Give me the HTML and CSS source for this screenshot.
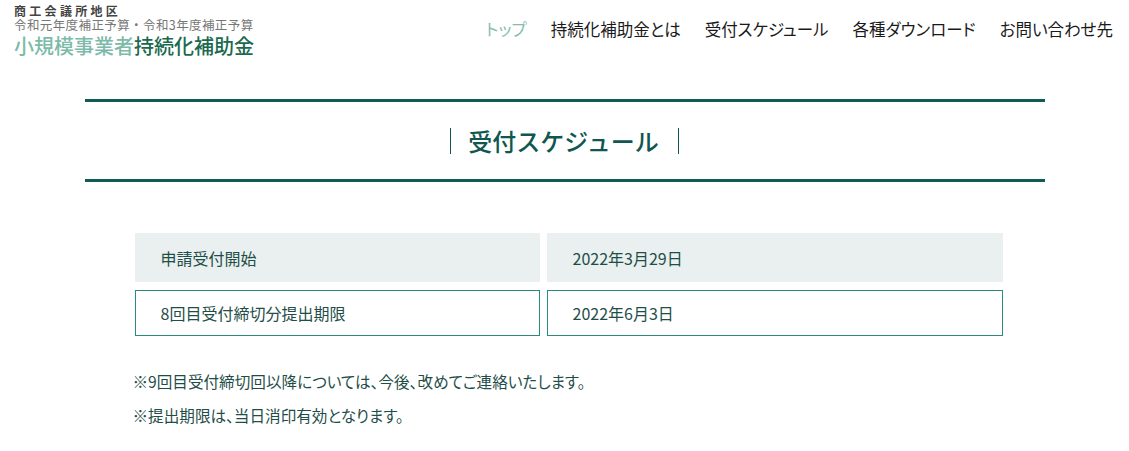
FILE: index.html
```html
<!DOCTYPE html>
<html lang="ja">

<head>
    <meta charset="UTF-8">
    <meta name="viewport" content="width=device-width, initial-scale=1.0">
    <title>受付スケジュール | 小規模事業者持続化補助金</title>
    <link rel="stylesheet" href="styles.css">
</head>

<body>
    <header class="site-header">
        <div class="logo">
            <p class="logo-org">商工会議所地区</p>
            <p class="logo-sub">令和元年度補正予算・令和3年度補正予算</p>
            <p class="logo-title"><span class="logo-light">小規模事業者</span><span class="logo-dark">持続化補助金</span></p>
        </div>
        <nav class="global-nav">
            <a href="#" class="current">トップ</a>
            <a href="#">持続化補助金とは</a>
            <a href="#">受付スケジュール</a>
            <a href="#">各種ダウンロード</a>
            <a href="#">お問い合わせ先</a>
        </nav>
    </header>

    <main class="container">
        <div class="page-title">
            <h1><span>受付スケジュール</span></h1>
        </div>

        <div class="schedule">
            <div class="cell head">申請受付開始</div>
            <div class="cell head">2022年3月29日</div>
            <div class="cell">8回目受付締切分提出期限</div>
            <div class="cell">2022年6月3日</div>
        </div>

        <!-- notes -->
        <div class="notes">
            <p>※9回目受付締切回以降については、今後、改めてご連絡いたします。</p>
            <p>※提出期限は、当日消印有効となります。</p>
        </div>
    </main>
</body>

</html>
```

FILE: styles.css
```css
body {
    font-family: "Noto Sans CJK JP", "Noto Sans", sans-serif;
    margin: 0;
    background-color: #fff;
    color: #222;
}

p {
    margin: 0;
}

.site-header {
    display: flex;
    justify-content: space-between;
    align-items: flex-start;
    padding: 4px 16px 0 14px;
    height: 61px;
}

.logo-org {
    font-size: 12px;
    font-weight: bold;
    letter-spacing: 3.3px;
    line-height: 14px;
    color: #444;
}

.logo-sub {
    font-size: 12.5px;
    line-height: 14px;
    letter-spacing: 0.4px;
    color: #777;
}

.logo-title {
    font-size: 20px;
    line-height: 28px;
    font-weight: 500;
}

.logo-light {
    color: #7dbaa9;
}

.logo-dark {
    color: #1b6a4e;
}

.global-nav {
    display: flex;
    gap: 24px;
    padding-top: 13px;
}

.global-nav a {
    font-size: 16.5px;
    font-feature-settings: "palt";
    color: #1a1a1a;
    text-decoration: none;
    line-height: 24px;
}

.global-nav a.current {
    color: #86bcae;
}

.container {
    width: 960px;
    margin: 34px auto 0;
}

.page-title {
    border-top: 3px solid #0f5c54;
    border-bottom: 3px solid #0f5c54;
    height: 77px;
    display: flex;
    justify-content: center;
    align-items: center;
}

.page-title h1 {
    margin: 0;
    font-size: 24px;
    font-weight: 500;
    color: #0f5750;
    line-height: 26px;
}

.page-title h1 span {
    display: block;
    padding: 0 19px 0 17px;
    border-left: 1px solid #0f5750;
    border-right: 1px solid #0f5750;
}

.schedule {
    display: grid;
    grid-template-columns: 405px 456px;
    grid-template-rows: 49px 46px;
    column-gap: 7px;
    row-gap: 8px;
    margin: 51px 0 0 50px;
}

.cell {
    display: flex;
    align-items: center;
    padding-left: 25px;
    font-size: 16px;
    color: #1f4e49;
    border: 1px solid #2b8a7b;
}

.cell.head {
    background-color: #e9f0ef;
    border-color: #e9f0ef;
}

.notes {
    margin: 28px 0 0 48px;
}

.notes p {
    font-size: 15.6px;
    line-height: 34px;
    color: #1f4e49;
    font-feature-settings: "palt";
}
```
